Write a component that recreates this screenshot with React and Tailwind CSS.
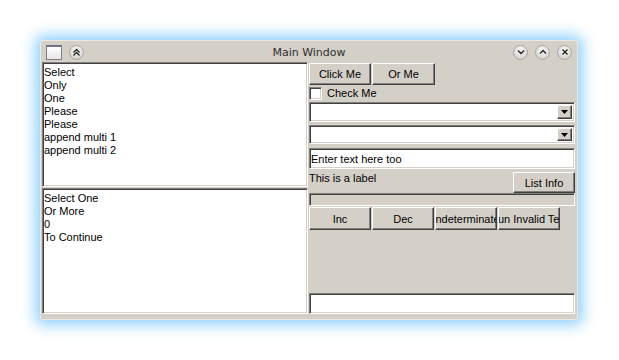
const font = { fontFamily: '"Liberation Sans", Arial, sans-serif' };

const sunken =
  "border border-t-[#808080] border-l-[#808080] border-b-white border-r-white shadow-[inset_1px_1px_0_#404040,inset_-1px_-1px_0_#d4d0c8]";
const raised =
  "border border-t-white border-l-white border-b-[#404040] border-r-[#404040] shadow-[inset_-1px_-1px_0_#808080] bg-[#d4d0c8]";

function Button({ children, className = "" }) {
  return (
    <div className={`${raised} flex items-center justify-center overflow-hidden whitespace-nowrap text-[11px] leading-none text-black ${className}`}>
      <span>{children}</span>
    </div>
  );
}

function ListBox({ items, className = "" }) {
  return (
    <div className={`${sunken} bg-white pl-[1px] pt-[3px] text-[11px] leading-[13px] text-black ${className}`}>
      {items.map((t, i) => (
        <div key={i}>{t}</div>
      ))}
    </div>
  );
}

function Combo({ className = "" }) {
  return (
    <div className={`${sunken} bg-white flex justify-end items-stretch p-[2px] ${className}`}>
      <div className={`${raised} w-[15px] flex items-center justify-center`}>
        <svg width="7" height="4" viewBox="0 0 7 4">
          <path d="M0 0h7L3.5 4z" fill="#000" />
        </svg>
      </div>
    </div>
  );
}

function Circle({ children }) {
  return (
    <div className="w-[15px] h-[15px] rounded-full border border-[#a9a7a3] bg-[radial-gradient(circle_at_50%_35%,#fbfbfa,#d9d7d3_70%,#c6c4c0)] flex items-center justify-center">
      {children}
    </div>
  );
}

export default function App() {
  return (
    <div className="w-[619px] h-[360px] bg-white pt-[40px] pl-[40px]" style={font}>
      <div className="w-[538px] h-[280px] flex flex-col rounded-t-[4px] rounded-b-[3px] bg-[#d4d0c8] border border-[#ebe9e5] shadow-[0_0_14px_5px_rgba(110,195,250,0.75)]">
        {/* title bar */}
        <div className="h-[21px] grid grid-cols-[1fr_auto_1fr] items-center pt-[1px]">
          <div className="flex items-center pl-[5px] gap-[7px]">
            <div className="w-[16px] h-[15px] border border-[#7f7f80] border-t-2 border-t-[#6d7380] bg-[linear-gradient(#ffffff,#e6e6e6)]" />
            <Circle>
              <svg width="9" height="9" viewBox="0 0 9 9" fill="none" stroke="#222" strokeWidth="1.3">
                <path d="M1.5 4.5L4.5 1.5L7.5 4.5M1.5 7.5L4.5 4.5L7.5 7.5" />
              </svg>
            </Circle>
          </div>
          <div className="font-['DejaVu_Sans'] text-[11px] text-[#2e2e2e] leading-none">Main Window</div>
          <div className="flex items-center justify-end pr-[5px] gap-[7px]">
            <Circle>
              <svg width="8" height="6" viewBox="0 0 8 6" fill="none" stroke="#222" strokeWidth="1.4">
                <path d="M1 1.5L4 4.5L7 1.5" />
              </svg>
            </Circle>
            <Circle>
              <svg width="8" height="6" viewBox="0 0 8 6" fill="none" stroke="#222" strokeWidth="1.4">
                <path d="M1 4.5L4 1.5L7 4.5" />
              </svg>
            </Circle>
            <Circle>
              <svg width="8" height="8" viewBox="0 0 8 8" fill="none" stroke="#222" strokeWidth="1.4">
                <path d="M1.5 1.5L6.5 6.5M6.5 1.5L1.5 6.5" />
              </svg>
            </Circle>
          </div>
        </div>

        {/* content */}
        <div className="flex-1 flex pl-[1px] pr-[2px] pb-[5px]">
          <div className="w-[266px] flex flex-col">
            <ListBox
              className="h-[125px]"
              items={["Select", "Only", "One", "Please", "Please", "append multi 1", "append multi 2"]}
            />
            <ListBox className="h-[126px] mt-[1px]" items={["Select One", "Or More", "0", "To Continue"]} />
          </div>

          <div className="w-[266px] ml-[1px] flex flex-col text-[11px] text-black">
            <div className="flex gap-[1px] mt-[1px] h-[22px]">
              <Button className="w-[62px] pt-[1px]">Click Me</Button>
              <Button className="w-[63px] pt-[1px]">Or Me</Button>
            </div>
            <div className="flex items-center h-[14px] mt-[1px] pt-[1px]">
              <div className={`${sunken} bg-white w-[13px] h-[13px]`} />
              <span className="ml-[5px] leading-none">Check Me</span>
            </div>
            <Combo className="h-[20px] mt-[2px]" />
            <Combo className="h-[19px] mt-[3px]" />
            <div className={`${sunken} bg-white h-[21px] mt-[4px] flex items-center pl-[1px] pt-[1px] leading-none`}>
              Enter text here too
            </div>
            <div className="h-[24px] flex justify-between">
              <div className="leading-[13px] pt-[3px]">This is a label</div>
              <Button className="w-[62px] h-[21px] self-end pt-[1px]">List Info</Button>
            </div>
            <div className={`${sunken} h-[13px]`} />
            <div className="flex gap-[1px] mt-[1px] h-[23px]">
              <Button className="w-[62px] pt-[1px]">Inc</Button>
              <Button className="w-[62px] pt-[1px]">Dec</Button>
              <Button className="w-[62px] pt-[1px]">Indeterminate</Button>
              <Button className="w-[62px] pt-[1px]">Run Invalid Test</Button>
            </div>
            <div className="flex-1" />
            <div className={`${sunken} bg-white h-[21px]`} />
          </div>
        </div>
      </div>
    </div>
  );
}
